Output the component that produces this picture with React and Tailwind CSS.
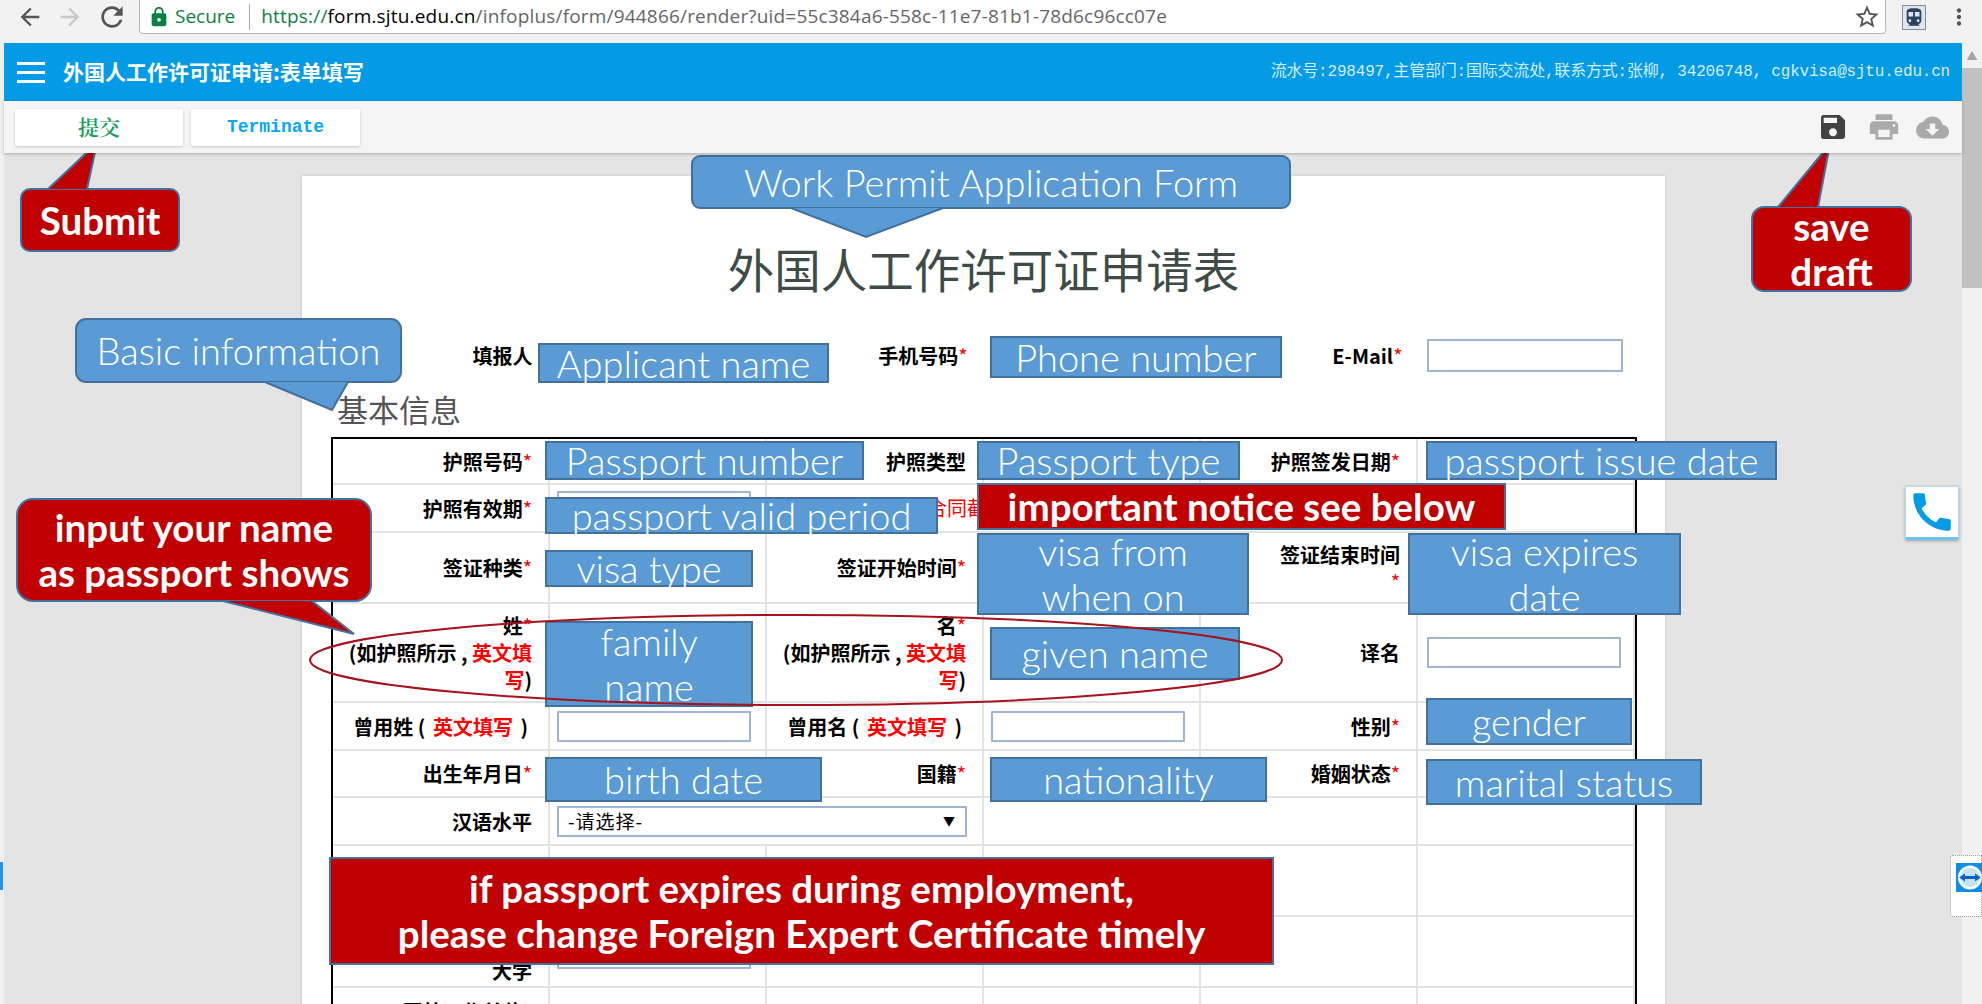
import React from 'react';
import { MdArrowBack, MdArrowForward, MdRefresh, MdLock, MdStarBorder, MdDirectionsTransit, MdMoreVert, MdSave, MdPrint, MdCloudDownload, MdCall } from 'react-icons/md';

const CJK = "font-['Noto_Sans_CJK_SC',sans-serif]";

function Star() {
  return <span className="text-[#ff0000] font-normal">*</span>;
}

function Red({ children, className = '' }) {
  return <span className={`text-[#ff0000] ${className}`}>{children}</span>;
}

// label cell, right aligned
function Label({ children, className = '' }) {
  return (
    <div className={`flex items-center justify-end text-right pl-2 pr-[16px] text-[20px] leading-[27px] font-bold text-black border-r-2 border-b-2 border-[#e3e3e3] ${className}`}>
      <div>{children}</div>
    </div>
  );
}

function Cell({ children, className = '' }) {
  return <div className={`flex items-center border-r-2 border-b-2 border-[#e3e3e3] ${className}`}>{children}</div>;
}

function Input({ className = '' }) {
  return <div className={`h-[31px] w-[194px] ml-[7px] bg-white border-2 border-[#9db6d3] rounded-[1px] ${className}`} />;
}

// blue / red rectangles laid over the screenshot
function Note({ className, children }) {
  return (
    <div className={`absolute flex items-center justify-center text-center font-['Lato',sans-serif] font-light text-white text-[38px] leading-[45px] bg-[#5b9bd5] border-2 border-[#41719c] ${className}`}>
      <div className="whitespace-nowrap">{children}</div>
    </div>
  );
}

function Alert({ className, children }) {
  return (
    <div className={`absolute flex items-center justify-center text-center font-['Lato',sans-serif] font-bold text-white text-[38.5px] leading-[45px] bg-[#c00000] border-2 border-[#41719c] ${className}`}>
      <div className="whitespace-nowrap">{children}</div>
    </div>
  );
}

function Tail({ points, fill }) {
  const closed = points.join(' ');
  return (
    <g>
      <polygon points={closed} fill={fill} />
      <polyline points={closed} fill="none" stroke="#41719c" strokeWidth="2" />
    </g>
  );
}

export default function App() {
  return (
    <div className={`relative w-[1982px] h-[1004px] overflow-hidden bg-[#f2f2f2] ${CJK}`}>
      {/* browser toolbar */}
      <div className="h-[43px] flex items-start bg-[#f2f2f2]">
        <div className="w-[139px] h-[34px] flex items-center pl-[16px] gap-[12px]">
          <MdArrowBack size={28} className="text-[#555555]" />
          <MdArrowForward size={28} className="text-[#c8c8c8]" />
          <MdRefresh size={32} className="text-[#555555]" />
        </div>
        <div className="w-[1747px] h-[34px] flex items-center bg-white border border-t-0 border-[#b9b9b9] rounded-b-[4px] font-['Open_Sans',sans-serif] text-[19px] pl-[9px]">
          <MdLock size={22} className="text-[#0b8043] -ml-[1px]" />
          <span className="ml-[5px] text-[#0b8043]">Secure</span>
          <span className="ml-[14px] h-[26px] w-px bg-[#a8a8a8]" />
          <span className="ml-[11px] whitespace-nowrap tracking-[0.18px] text-[#666666]">
            <span className="text-[#0b8043]">https://</span>
            <span className="text-black">form.sjtu.edu.cn</span>
            /infoplus/form/944866/render?uid=55c384a6-558c-11e7-81b1-78d6c96cc07e
          </span>
          <MdStarBorder size={28} className="ml-auto mr-[4px] text-[#555555]" />
        </div>
        <div className="flex-1 h-[34px] flex items-center pl-[16px]">
          <div className="w-[24px] h-[25px] flex items-center justify-center border border-[#7f8ea0] bg-[#dfe6ee]">
            <MdDirectionsTransit size={23} className="text-[#2c4364]" />
          </div>
          <MdMoreVert size={26} className="ml-[20px] -mr-[10px] text-[#555555]" />
        </div>
      </div>

      <div className="h-[961px] flex">
        <div className="w-[4px] shrink-0 bg-[#f0f0f0]" />
        <div className="flex-1 flex flex-col min-w-0">
          {/* blue title bar */}
          <div className="h-[58px] shrink-0 flex items-center bg-[#039be5] text-white pl-[13px] pr-[12px]">
            <div className="w-[28px] flex flex-col gap-[6px]">
              <div className="h-[3px] bg-white" />
              <div className="h-[3px] bg-white" />
              <div className="h-[3px] bg-white" />
            </div>
            <div className="ml-[18px] text-[21px] font-bold">外国人工作许可证申请:表单填写</div>
            <div className="ml-auto text-[16px] text-[#d3ecfa] font-['Liberation_Mono','Noto_Sans_CJK_SC',monospace] whitespace-nowrap tracking-[-0.2px]">
              流水号:298497,主管部门:国际交流处,联系方式:张柳, 34206748, cgkvisa@sjtu.edu.cn
            </div>
          </div>
          {/* action bar */}
          <div className="h-[52px] shrink-0 flex items-center bg-[#f5f5f5] shadow-[0_1px_3px_rgba(0,0,0,0.25)] z-10 pl-[11px] pr-[13px]">
            <div className="h-[37px] w-[168px] flex items-center justify-center bg-white rounded-[2px] shadow-[0_1px_3px_rgba(0,0,0,0.2)] text-[#0f9d58] text-[21px] font-semibold font-['Noto_Serif_CJK_SC','Noto_Sans_CJK_SC',serif]">提交</div>
            <div className="ml-[8px] h-[37px] w-[169px] flex items-center justify-center bg-white rounded-[2px] shadow-[0_1px_3px_rgba(0,0,0,0.2)] text-[#03a9f4] text-[18px] font-bold font-['Liberation_Mono',monospace]">Terminate</div>
            <MdSave size={32} className="ml-auto text-[#424242]" />
            <MdPrint size={34} className="ml-[18px] text-[#aaaaaa]" />
            <MdCloudDownload size={33} className="ml-[15px] text-[#aaaaaa]" />
          </div>
          {/* form */}
          <div className="flex-1 min-h-0 overflow-hidden bg-[#e4e4e4] pt-[23px] pl-[298px]">
            <div className="w-[1363px] h-[900px] bg-white px-[30px] shadow-[0_0_3px_rgba(0,0,0,0.15)]">
              <div className="pt-[60px] h-[124px] text-center text-[46.5px] leading-[64px] text-[#3d4c45]">外国人工作许可证申请表</div>
              <div className="mt-[36px] h-[40px] w-[1305px] grid grid-cols-6 text-[20px] font-bold">
                <div className="text-right pr-[17px] leading-[40px]">填报人</div>
                <div />
                <div className="text-right pr-[17px] leading-[40px]">手机号码<Star /></div>
                <div />
                <div className="text-right pr-[17px] leading-[40px]">E-Mail<Star /></div>
                <div className="pl-[7px] pt-[3px]"><div className="w-[196px] h-[33px] border-2 border-[#9db6d3]" /></div>
              </div>
              <div className="mt-[13px] h-[48px] pl-[5px] text-[31px] leading-[40px] text-[#555555]">基本信息</div>
              <div className="-ml-[1px] w-[1306px] border-2 border-b-0 border-black grid grid-cols-6 grid-rows-[46px_48px_71px_99px_48px_47px_48px_71px_71px_71px]">
                <Label>护照号码<Star /></Label>
                <Cell />
                <Label>护照类型</Label>
                <Cell />
                <Label>护照签发日期<Star /></Label>
                <Cell />

                <Label>护照有效期<Star /></Label>
                <Cell className="items-start pt-[6px]"><Input /></Cell>
                <Cell className="col-span-4 text-[20px] text-[#ff0000] whitespace-nowrap">护照有效期须长于合同截止日期</Cell>

                <Label>签证种类<Star /></Label>
                <Cell />
                <Label>签证开始时间<Star /></Label>
                <Cell />
                <Label>签证结束时间<br /><Star /></Label>
                <Cell />

                <Label>姓<Star /><br />(如护照所示 , <Red>英文填写</Red>)</Label>
                <Cell />
                <Label>名<Star /><br />(如护照所示 , <Red>英文填写</Red>)</Label>
                <Cell />
                <Label>译名</Label>
                <Cell><Input className="ml-[9px]" /></Cell>

                <Label className="pr-[20px]">曾用姓 ( <Red className="mx-[3px]">英文填写</Red> )</Label>
                <Cell><Input /></Cell>
                <Label className="pr-[20px]">曾用名 ( <Red className="mx-[3px]">英文填写</Red> )</Label>
                <Cell><Input /></Cell>
                <Label>性别<Star /></Label>
                <Cell />

                <Label>出生年月日<Star /></Label>
                <Cell />
                <Label>国籍<Star /></Label>
                <Cell />
                <Label>婚姻状态<Star /></Label>
                <Cell />

                <Label>汉语水平</Label>
                <Cell className="col-span-2">
                  <div className="h-[31px] w-[410px] ml-[7px] flex items-center justify-between pl-[9px] pr-[9px] border-2 border-[#9db6d3] text-[19px] tracking-[1px] text-black">
                    <span>-请选择-</span>
                    <span className="text-[12px]">▼</span>
                  </div>
                </Cell>
                <Cell className="col-span-2" />
                <Cell />

                <Label>英语水平</Label>
                <Cell />
                <Cell />
                <Cell className="col-span-2" />
                <Cell />

                <Label className="pt-[10px]">最高学历毕业<br />大学</Label>
                <Cell className="items-end pb-[17px]"><Input /></Cell>
                <Cell />
                <Cell />
                <Cell />
                <Cell />

                <Label className="items-start pt-[10px]">国外工作单位<Star /></Label>
                <Cell />
                <Cell />
                <Cell />
                <Cell />
                <Cell />
              </div>
            </div>
          </div>
        </div>
        {/* scrollbar */}
        <div className="w-[20px] shrink-0 flex flex-col bg-[#f1f1f1]">
          <div className="h-[25px] text-center text-[11px] leading-[25px] text-[#a3a3a3]">▲</div>
          <div className="h-[220px] bg-[#c1c1c1]" />
        </div>
      </div>

      {/* call to phone, remote tab */}
      <div className="absolute left-[1905px] top-[486px] w-[54px] h-[54px] flex items-center justify-center bg-white border border-[#b5dcf3] border-b-[3px] border-b-[#6cc1ee] shadow-[0_1px_3px_rgba(0,0,0,0.3)]">
        <MdCall size={50} className="text-[#039be5] shrink-0" />
      </div>
      <div className="absolute left-[1950px] top-[855px] w-[32px] h-[62px] bg-white border border-dotted border-[#999999] rounded-l-[3px] pl-[5px] pt-[7px]">
        <svg width="26" height="29" viewBox="0 0 26 29">
          <rect width="26" height="29" fill="#0e8ee9" />
          <circle cx="14" cy="14.5" r="12" fill="#ffffff" />
          <circle cx="14" cy="14.5" r="9.5" fill="#0e8ee9" opacity="0.25" />
          <path d="M3 14.5 L9 10.5 V13 H19 V10.5 L25 14.5 L19 18.5 V16 H9 V18.5 Z" fill="#0e62c4" />
        </svg>
      </div>
      <div className="absolute left-0 top-[862px] w-[3px] h-[28px] bg-[#2196f3]" />

      {/* annotations */}
      <Alert className="left-[20px] top-[188px] w-[160px] h-[64px] rounded-[10px]">Submit</Alert>
      <Alert className="left-[1751px] top-[206px] w-[161px] h-[86px] rounded-[13px]">save<br />draft</Alert>
      <Alert className="left-[16px] top-[498px] w-[356px] h-[104px] rounded-[17px]">input your name<br />as passport shows</Alert>
      <Note className="left-[691px] top-[155px] w-[600px] h-[54px] rounded-[9px]">Work Permit Application Form</Note>
      <Note className="left-[75px] top-[318px] w-[327px] h-[65px] rounded-[11px]">Basic information</Note>

      <Note className="left-[538px] top-[343px] w-[291px] h-[40px]">Applicant name</Note>
      <Note className="left-[990px] top-[336px] w-[292px] h-[42px]">Phone number</Note>
      <Note className="left-[545px] top-[441px] w-[319px] h-[39px]">Passport number</Note>
      <Note className="left-[977px] top-[441px] w-[263px] h-[39px]">Passport type</Note>
      <Note className="left-[1426px] top-[441px] w-[351px] h-[39px]">passport issue date</Note>
      <Note className="left-[545px] top-[497px] w-[393px] h-[37px]">passport valid period</Note>
      <Alert className="left-[977px] top-[483px] w-[529px] h-[47px]">important notice see below</Alert>
      <Note className="left-[545px] top-[550px] w-[208px] h-[37px]">visa type</Note>
      <Note className="left-[977px] top-[533px] w-[272px] h-[82px]">visa from<br />when on</Note>
      <Note className="left-[1408px] top-[533px] w-[273px] h-[82px]">visa expires<br />date</Note>
      <Note className="left-[545px] top-[621px] w-[208px] h-[86px]">family<br />name</Note>
      <Note className="left-[990px] top-[627px] w-[250px] h-[53px]">given name</Note>
      <Note className="left-[1426px] top-[698px] w-[206px] h-[47px]">gender</Note>
      <Note className="left-[545px] top-[757px] w-[277px] h-[45px]">birth date</Note>
      <Note className="left-[990px] top-[757px] w-[277px] h-[45px]">nationality</Note>
      <Note className="left-[1426px] top-[759px] w-[276px] h-[46px]">marital status</Note>
      <Alert className="left-[329px] top-[857px] w-[945px] h-[108px]">if passport expires during employment,<br />please change Foreign Expert Certificate timely</Alert>

      {/* callout tails and the ring round the name fields */}
      <svg className="absolute left-0 top-0 pointer-events-none" width="1982" height="1004" viewBox="0 0 1982 1004">
        <ellipse cx="796" cy="660" rx="486" ry="45" fill="none" stroke="#a8121c" strokeWidth="2" />
        <Tail points={['48,189', '97,143', '87,189']} fill="#c00000" />
        <Tail points={['1778,207', '1830,144', '1818,207']} fill="#c00000" />
        <Tail points={['223,601', '354,634', '312,601']} fill="#c00000" />
        <Tail points={['791,208', '866,237', '943,208']} fill="#5b9bd5" />
        <Tail points={['265,382', '332,410', '348,382']} fill="#5b9bd5" />
      </svg>
    </div>
  );
}
